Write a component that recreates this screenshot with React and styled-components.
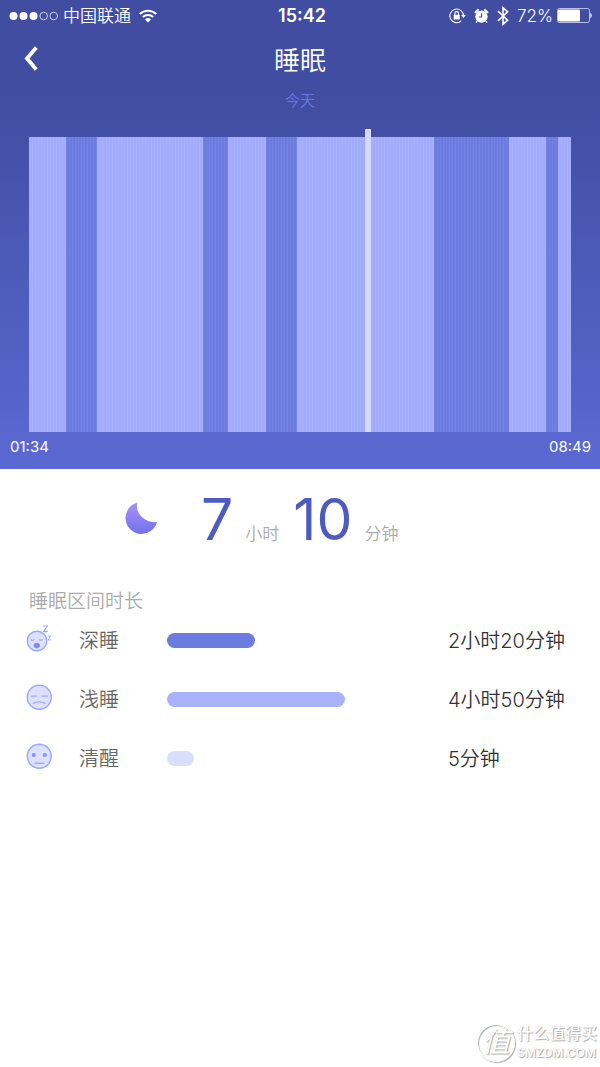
import React from "react";
import styled, { createGlobalStyle } from "styled-components";

const GlobalStyle = createGlobalStyle`
  * {
    box-sizing: border-box;
  }
  body {
    margin: 0;
    background: #fff;
    font-family: Inter, "Noto Sans CJK SC", sans-serif;
  }
`;

const Page = styled.div`
  min-height: 100vh;
  display: flex;
  flex-direction: column;
`;

const Hero = styled.header`
  padding-bottom: 12px;
  color: #fff;
  background: linear-gradient(#414da0 20%, #5b69d3);
`;

const StatusBar = styled.div`
  height: 31px;
  padding: 0 8px 0 9px;
  display: grid;
  grid-template-columns: 1fr auto 1fr;
  align-items: center;
  font-size: 17px;
  line-height: 30px;
`;

const StatusLeft = styled.div`
  display: flex;
  align-items: center;
  gap: 5px;
  font-weight: 350;

  svg:last-child {
    margin-left: 3px;
  }
`;

const Clock = styled.div`
  padding-left: 3px;
  font-size: 18px;
  font-weight: 600;
`;

const StatusRight = styled.div`
  display: flex;
  align-items: center;
  justify-content: flex-end;
  gap: 8px;
  font-weight: 300;
`;

const Battery = styled.div`
  display: flex;
  align-items: center;
  gap: 4px;
`;

const NavBar = styled.nav`
  height: 60px;
  padding: 0 20px;
  display: grid;
  grid-template-columns: 40px 1fr 40px;
  align-items: center;
`;

const BackButton = styled.button`
  height: 40px;
  padding: 0 4px 4px;
  display: flex;
  align-items: center;
  border: 0;
  background: none;
  color: #fff;
  cursor: pointer;
`;

const Title = styled.h1`
  margin: 0;
  font-size: 26px;
  font-weight: 350;
  line-height: 40px;
  text-align: center;
`;

const Day = styled.div`
  color: #6b78e0;
  font-size: 15px;
  font-weight: 350;
  line-height: 20px;
  text-align: center;
`;

const Chart = styled.div`
  position: relative;
  height: 295px;
  margin: 26px 29px 0;
  display: flex;
`;

const Segment = styled.div`
  flex: ${(props) => props.$span} 1 0;
  background-color: ${(props) => (props.$deep ? "#6c7bdf" : "#a2acfb")};
  background-image: repeating-linear-gradient(
    90deg,
    rgba(255, 255, 255, 0.06) 0 1px,
    transparent 1px 3px
  );
`;

const Marker = styled.div`
  position: absolute;
  top: -8px;
  bottom: 0;
  left: 62%;
  width: 6px;
  background: #d5d9fb;
`;

const ChartTimes = styled.div`
  padding: 5px 9px 0 10px;
  display: flex;
  justify-content: space-between;
  font-size: 15px;
  line-height: 20px;
`;

const Summary = styled.section`
  padding: 17px 125px 0;
  display: flex;
  align-items: baseline;
  white-space: nowrap;
`;

const MoonBox = styled.div`
  width: 76px;
  align-self: center;
`;

const Amount = styled.span`
  color: #4d5bc0;
  font-size: 57px;
  line-height: 68px;
`;

const Unit = styled.span`
  margin: 0 14px 0 12px;
  color: #aaa;
  font-size: 17px;
  font-weight: 350;
`;

const Heading = styled.h2`
  margin: 34px 29px 0;
  color: #aaa;
  font-size: 19px;
  font-weight: 350;
  line-height: 28px;
`;

const Stages = styled.ul`
  margin: 0;
  padding: 0 0 0 26px;
  list-style: none;
`;

const Stage = styled.li`
  height: 59px;
  padding-bottom: 10px;
  display: grid;
  grid-template-columns: 53px 88px 1fr 152px;
  align-items: center;
  font-size: 20px;
  font-weight: 350;
  line-height: 30px;
`;

const Face = styled.svg`
  display: block;
  margin-bottom: 5px;
`;

const StageName = styled.span`
  color: #666;
`;

const StageBar = styled.div`
  height: 15px;
  border-radius: 8px;
  background: ${(props) => props.$color};
`;

const StageTime = styled.span`
  color: #333;
`;

const Watermark = styled.footer`
  margin-top: auto;
  padding: 0 3px 5px 0;
  display: flex;
  align-items: center;
  justify-content: flex-end;
  gap: 2px;
  color: #fff;
  text-shadow: 1px 1px 1px #aaa, 0 0 1px #ccc;
`;

const Seal = styled.div`
  width: 38px;
  height: 38px;
  border: 1px solid #fff;
  border-radius: 50%;
  box-shadow: 1px 1px 1px #aaa, inset 1px 1px 1px #aaa;
  font-size: 28px;
  line-height: 34px;
  text-align: center;
  font-style: italic;
`;

const Brand = styled.div`
  font-size: 16px;
  font-weight: 500;
  line-height: 21px;
`;

const Domain = styled.div`
  font-size: 12px;
  font-weight: 600;
  line-height: 18px;
`;

const segments = [
  { span: 37 },
  { span: 31, deep: true },
  { span: 106 },
  { span: 25, deep: true },
  { span: 38 },
  { span: 31, deep: true },
  { span: 137 },
  { span: 75, deep: true },
  { span: 37 },
  { span: 12, deep: true },
  { span: 13 },
];

const SignalDots = () => (
  <svg width="49" height="10" viewBox="0 0 49 10" fill="#fff">
    <circle cx="4.5" cy="5" r="4" />
    <circle cx="14.5" cy="5" r="4" />
    <circle cx="24.5" cy="5" r="4" />
    <g fill="none" stroke="#fff" strokeWidth="0.7">
      <circle cx="34.7" cy="5" r="3.8" />
      <circle cx="44.7" cy="5" r="3.8" />
    </g>
  </svg>
);

const WifiIcon = () => (
  <svg width="18" height="14" viewBox="0 0 18 14" fill="none" stroke="#fff" strokeWidth="2">
    <path d="M0.8 5 A11.8 11.8 0 0 1 17.2 5" />
    <path d="M3.8 8.1 A7.6 7.6 0 0 1 14.2 8.1" />
    <path d="M9 13.4 L6 10.4 A4.4 4.4 0 0 1 12 10.4 Z" fill="#fff" stroke="none" />
  </svg>
);

const LockIcon = () => (
  <svg width="17" height="16" viewBox="0 0 17 16" fill="none" stroke="#fff">
    <path d="M14.5 8 A6.8 6.8 0 1 0 12.3 12.9" strokeWidth="1.1" />
    <path d="M12.2 7 H16.8 L14.5 10 Z" fill="#fff" stroke="none" />
    <rect x="4.7" y="6.8" width="6" height="4.6" rx="0.5" fill="#fff" stroke="none" />
    <path d="M5.9 7 V5.4 A1.8 1.8 0 0 1 9.5 5.4 V7" strokeWidth="1.1" />
  </svg>
);

const AlarmIcon = () => (
  <svg width="15" height="16" viewBox="0 0 15 16">
    <circle cx="7.5" cy="8.6" r="6.2" fill="#fff" />
    <g stroke="#fff" strokeWidth="2.2" strokeLinecap="round">
      <path d="M1.6 4.2 L4 2" />
      <path d="M13.4 4.2 L11 2" />
    </g>
    <path d="M3 13 L2 14.6 M12 13 L13 14.6" stroke="#fff" strokeWidth="1.3" />
    <path d="M7.6 5.2 V9 H4.8" fill="none" stroke="#424ea2" strokeWidth="1.1" />
  </svg>
);

const BluetoothIcon = () => (
  <svg width="12" height="20" viewBox="0 0 12 20" fill="none" stroke="#fff" strokeWidth="1.6">
    <path d="M1 5.2 L10.6 14.2 L6 18.2 V1.8 L10.6 5.8 L1 14.8" />
  </svg>
);

const BatteryIcon = () => (
  <svg width="35" height="15" viewBox="0 0 35 15">
    <rect x="0.5" y="0.5" width="32" height="14" rx="2" fill="none" stroke="#b9beea" />
    <rect x="1" y="1.5" width="22" height="12" rx="1" fill="#fff" />
    <path d="M33.4 4.5 Q36 7.5 33.4 10.5 Z" fill="#fff" />
  </svg>
);

const Moon = () => (
  <svg width="33" height="32" viewBox="0 0 33 32">
    <defs>
      <linearGradient id="moon" x1="0" y1="0" x2="0" y2="1">
        <stop offset="0" stopColor="#a990f8" />
        <stop offset="1" stopColor="#7173ea" />
      </linearGradient>
    </defs>
    <path d="M12.5 0.5 C9.5 10 19 21.5 32 20 A16 16 0 1 1 12.5 0.5 Z" fill="url(#moon)" />
  </svg>
);

const DeepFace = () => (
  <Face width="27" height="28" viewBox="0 0 27 28" fill="none" stroke="#9ba8fa">
    <circle cx="11" cy="17" r="9.8" fill="#dde1fd" strokeWidth="1.4" />
    <path d="M4.8 15.3 Q6.5 17.3 8.4 15.3 M13 15.3 Q14.8 17.3 16.7 15.3" strokeWidth="1.1" />
    <ellipse cx="10.8" cy="21.5" rx="3.1" ry="2.8" fill="#7f8df0" stroke="none" />
    <path d="M17.1 2 H21.2 L17.5 7.6 H21.9" strokeWidth="1.2" />
    <path d="M21.7 12 H24.6 L22.1 16 H25.1" strokeWidth="1" />
  </Face>
);

const LightFace = () => (
  <Face width="27" height="27" viewBox="0 0 27 27" fill="none" stroke="#9ba8fa">
    <circle cx="13.3" cy="13.3" r="12" fill="#dde1fd" strokeWidth="1.4" />
    <path d="M4.8 12.2 H10.8 M15.8 12.2 H22" strokeWidth="1.2" />
    <path d="M7 19.4 Q13.3 16.4 19.6 19.4" strokeWidth="1.4" />
  </Face>
);

const AwakeFace = () => (
  <Face width="27" height="27" viewBox="0 0 27 27" fill="none" stroke="#9ba8fa">
    <circle cx="13.3" cy="13.3" r="12" fill="#dde1fd" strokeWidth="1.4" />
    <circle cx="7.8" cy="12" r="2.1" fill="#8796f5" stroke="none" />
    <circle cx="18.8" cy="12" r="2.1" fill="#8796f5" stroke="none" />
    <path d="M8.3 20.3 H18.3" strokeWidth="1.4" />
  </Face>
);

const stages = [
  { name: "深睡", time: "2小时20分钟", percent: 31.4, color: "#6c7bdf", Icon: DeepFace },
  { name: "浅睡", time: "4小时50分钟", percent: 63.5, color: "#a9b3fc", Icon: LightFace },
  { name: "清醒", time: "5分钟", percent: 9.6, color: "#dadefd", Icon: AwakeFace },
];

const App = () => {
  return (
    <Page>
      <GlobalStyle />
      <Hero>
        <StatusBar>
          <StatusLeft>
            <SignalDots />
            <span>中国联通</span>
            <WifiIcon />
          </StatusLeft>
          <Clock>15:42</Clock>
          <StatusRight>
            <LockIcon />
            <AlarmIcon />
            <BluetoothIcon />
            <Battery>
              <span>72%</span>
              <BatteryIcon />
            </Battery>
          </StatusRight>
        </StatusBar>
        <NavBar>
          <BackButton aria-label="返回">
            <svg width="14" height="26" viewBox="0 0 14 26" fill="none" stroke="currentColor" strokeWidth="3.8">
              <path d="M12.3 1.5 L3 12.5 L12.3 23.5" />
            </svg>
          </BackButton>
          <Title>睡眠</Title>
        </NavBar>
        <Day>今天</Day>
        <Chart>
          {segments.map((segment, i) => (
            <Segment key={i} $span={segment.span} $deep={segment.deep} />
          ))}
          <Marker />
        </Chart>
        <ChartTimes>
          <span>01:34</span>
          <span>08:49</span>
        </ChartTimes>
      </Hero>
      <Summary>
        <MoonBox>
          <Moon />
        </MoonBox>
        <Amount>7</Amount>
        <Unit>小时</Unit>
        <Amount>10</Amount>
        <Unit>分钟</Unit>
      </Summary>
      <Heading>睡眠区间时长</Heading>
      <Stages>
        {stages.map(({ name, time, percent, color, Icon }) => (
          <Stage key={name}>
            <Icon />
            <StageName>{name}</StageName>
            <StageBar $color={color} style={{ width: `${percent}%` }} />
            <StageTime>{time}</StageTime>
          </Stage>
        ))}
      </Stages>
      <Watermark>
        <Seal>值</Seal>
        <div>
          <Brand>什么值得买</Brand>
          <Domain>SMZDM.COM</Domain>
        </div>
      </Watermark>
    </Page>
  );
};

export default App;
